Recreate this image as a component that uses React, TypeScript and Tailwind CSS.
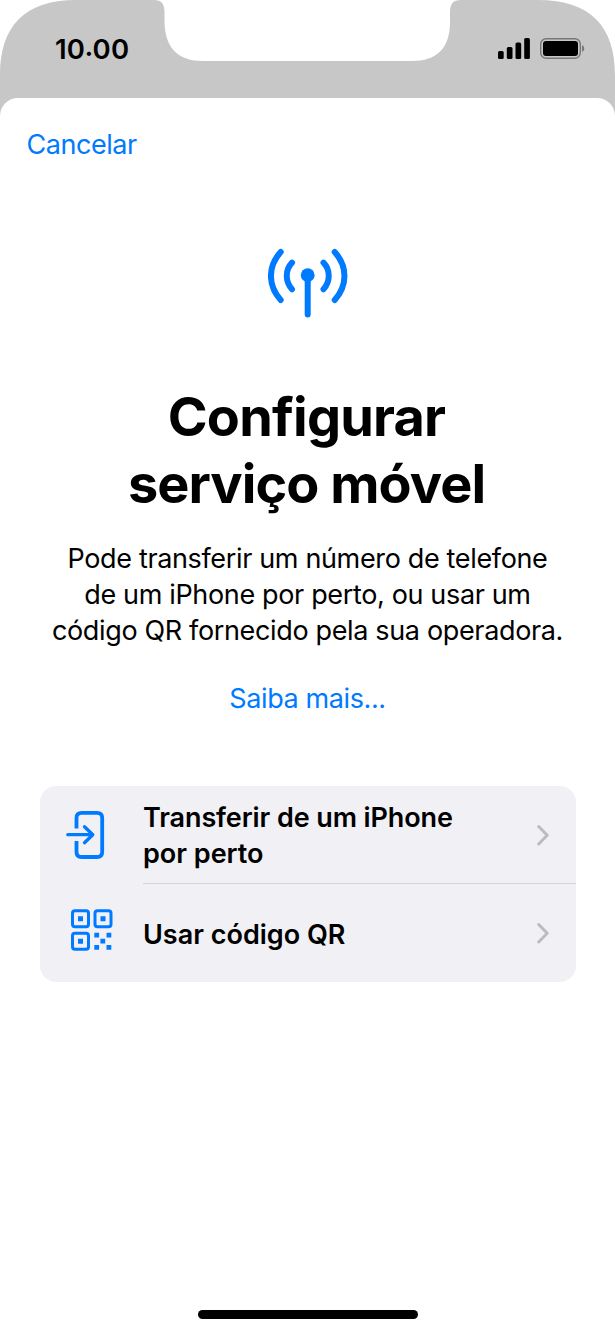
import React from 'react';

function StatusBackdrop() {
  return (
    <svg className="absolute inset-x-0 top-0" width="615" height="124" viewBox="0 0 615 124" aria-hidden="true">
      <path
        fill="#c7c7c7"
        d="M0 124V75C0 27 24 0 76 0H154C162 0 164.500 4 164.500 13V22C165 48 178 61 203 61H412C437 61 450 48 450 22V13C450 4 452.500 0 461 0H538C591 0 615 27 615 75V124Z"
      />
    </svg>
  );
}

function SignalIcon() {
  return (
    <svg width="33" height="22" viewBox="0 0 33 22" aria-hidden="true">
      <rect x="0" y="13" width="5.700" height="8" rx="1.500" />
      <rect x="8.800" y="9" width="5.700" height="12" rx="1.500" />
      <rect x="17.500" y="4.500" width="5.700" height="16.500" rx="1.500" />
      <rect x="26.200" y="0" width="5.700" height="21" rx="1.500" />
    </svg>
  );
}

function BatteryIcon() {
  return (
    <svg width="46" height="22" viewBox="0 0 46 22" aria-hidden="true">
      <rect x="0.700" y="0.700" width="39.600" height="19.600" rx="5.500" fill="none" stroke="#777" strokeWidth="1.400" />
      <rect x="3" y="3" width="35" height="15" rx="3" />
      <path d="M42 7.200C45 8.200 45 12.800 42 13.800Z" fill="#777" />
    </svg>
  );
}

function AntennaIcon() {
  return (
    <svg width="80" height="70" viewBox="0 0 80 70" fill="none" stroke="#007aff" strokeWidth="6" strokeLinecap="round" aria-hidden="true">
      <path d="M12.700 4C-0.300 18.500 -0.300 37.500 12.700 52M24 14.700C17 22 17 33.500 24 41.200M55.500 14.700C62.500 22 62.500 33.500 55.500 41.200M66.700 4C79.700 18.500 79.700 37.500 66.700 52M39.700 28V66.500" />
      <circle cx="39.700" cy="27.200" r="6.900" fill="#007aff" stroke="none" />
    </svg>
  );
}

function TransferIcon() {
  return (
    <svg width="40" height="50" viewBox="0 0 40 50" fill="none" stroke="#007aff" strokeWidth="3.800" strokeLinejoin="round" aria-hidden="true">
      <path d="M10.500 18.500V8C10.500 4 12.500 2.900 15.500 2.900H31C34.500 2.900 36.200 4.500 36.200 8V42C36.200 45.500 34.500 47 31 47H15.500C12.500 47 10.500 45.500 10.500 42V31" />
      <path d="M1.800 24.700H26.500M18.500 16.700L26.800 24.700L18.500 32.700" strokeLinecap="round" strokeWidth="3.300" />
    </svg>
  );
}

function QrIcon() {
  return (
    <svg className="mb-[5px]" width="43" height="43" viewBox="0 0 43 43" fill="#007aff" aria-hidden="true">
      <g fill="none" stroke="#007aff" strokeWidth="3">
        <rect x="1.500" y="1.700" width="16" height="16" rx="2.500" />
        <rect x="24" y="1.700" width="16" height="16" rx="2.500" />
        <rect x="1.500" y="24.200" width="16" height="16" rx="2.500" />
      </g>
      <path d="M7 7.200h5v5h-5zM29.500 7.200h5v5h-5zM7 29.700h5v5h-5zM23.300 23.800h4.800v4.800h-4.800zM35.500 23.800h4.800v4.800h-4.800zM29.400 29.800h4.800v4.800h-4.800zM23.300 35.900h4.800v4.800h-4.800zM35.500 35.900h4.800v4.800h-4.800z" />
    </svg>
  );
}

function Chevron() {
  return (
    <svg width="13" height="22" viewBox="0 0 13 22" fill="none" stroke="#bcbcc0" strokeWidth="3" strokeLinecap="round" strokeLinejoin="round" aria-hidden="true">
      <path d="M1.700 2.500L10.200 11.300L1.700 20" />
    </svg>
  );
}

export default function App() {
  return (
    <div className="relative flex h-[1332px] w-[615px] flex-col overflow-hidden bg-white font-['Inter',sans-serif] text-black">
      <StatusBackdrop />
      <header className="relative flex h-[98px] shrink-0 justify-between pr-[29px] pl-[55px]">
        <time className="mt-[31px] text-[27.500px] leading-[36px] font-semibold tracking-[0.200px] whitespace-nowrap">
          10<span className="relative -top-[3.500px]">.</span>00
        </time>
        <div className="mt-[38px] flex h-[22px] gap-[9px]">
          <SignalIcon />
          <BatteryIcon />
        </div>
      </header>

      <main className="relative flex flex-1 flex-col items-center rounded-t-[18px] bg-white">
        <button className="mt-[29px] ml-[26.500px] self-start text-[27px] leading-[36px] tracking-[-0.450px] whitespace-nowrap text-[#007aff]">Cancelar</button>
        <div className="mt-[85px] h-[70px]">
          <AntennaIcon />
        </div>
        <h1 className="mt-[65px] mr-[2px] text-center text-[54px] leading-[67px] font-bold whitespace-nowrap">
          <span className="block tracking-[-0.800px]">Configurar</span>
          <span className="block tracking-[-0.950px]">serviço móvel</span>
        </h1>
        <p className="mt-[24px] text-center text-[27px] leading-[36px] tracking-[-0.350px] whitespace-nowrap">
          <span className="block">Pode transferir um número de telefone</span>
          <span className="block">de um iPhone por perto, ou usar um</span>
          <span className="block">código QR fornecido pela sua operadora.</span>
        </p>
        <a className="mt-[32px] text-[27px] leading-[36px] tracking-[-0.400px] whitespace-nowrap text-[#007aff]">Saiba mais...</a>

        <div className="mt-[69px] flex h-[196px] w-[536px] flex-col rounded-[16px] bg-[#f1f0f5] text-[27px] leading-[36px] font-semibold tracking-[-0.100px]">
          <button className="flex h-[97px] items-center pr-[26px] pl-[26px] text-left">
            <TransferIcon />
            <span className="ml-[37.500px] flex-1 pt-[3px] whitespace-nowrap">
              <span className="block">Transferir de um iPhone</span>
              <span className="block tracking-[0px]">por perto</span>
            </span>
            <Chevron />
          </button>
          <div className="ml-[103px] h-px bg-[#d5d5d9]" />
          <button className="flex h-[98px] items-center pr-[26px] pl-[31px] text-left">
            <QrIcon />
            <span className="ml-[29.500px] flex-1 pt-[3px] tracking-[0px] whitespace-nowrap">Usar código QR</span>
            <Chevron />
          </button>
        </div>
      </main>
      <div className="relative mb-[13px] h-[9px] w-[220px] shrink-0 self-center rounded-full bg-black" />
    </div>
  );
}
